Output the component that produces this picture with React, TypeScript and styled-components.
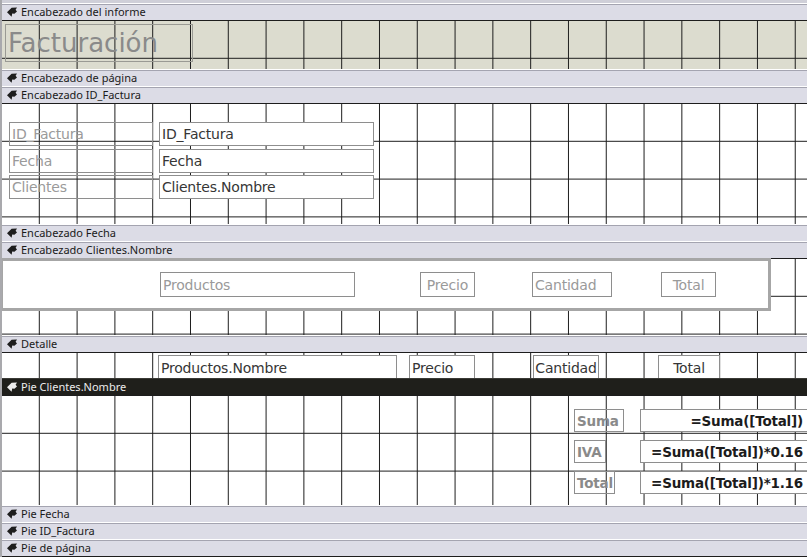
import React from "react";
import styled, { createGlobalStyle, css } from "styled-components";

const Global = createGlobalStyle`
  html, body { margin: 0; padding: 0; background: #fff; overflow: hidden; }
  #root { width: 807px; height: 557px; }
`;

const Page = styled.div`
  width: 807px;
  height: 557px;
  box-sizing: border-box;
  border-left: 2px solid #a9a9ad;
  padding-top: 3px;
  background: #cfcfd8;
  display: flex;
  flex-direction: column;
  overflow: hidden;
`;

const Bar = styled.div<{ $dark?: boolean }>`
  flex: 0 0 17px;
  height: 17px;
  box-sizing: border-box;
  display: flex;
  align-items: center;
  gap: 4px;
  padding: 0 0 0 5px;
  font-family: "Noto Sans", "DejaVu Sans", sans-serif;
  font-size: 11px;
  white-space: nowrap;
  ${(p) =>
    p.$dark
      ? css`
          background: linear-gradient(#3a3a36 0 1px, #1f1f1b 1px);
          color: #ececec;
        `
      : css`
          background: linear-gradient(#ffffff 0 1px, #a4a4b0 1px 2px, #dcdce6 2px);
          color: #1a1a1a;
        `}
`;

const BarLabel = styled.span`
  line-height: 15px;
`;

const Section = styled.div<{ $h: number; $bg?: string }>`
  position: relative;
  flex: 0 0 ${(p) => p.$h}px;
  height: ${(p) => p.$h}px;
  box-sizing: border-box;
  overflow: hidden;
  background-color: ${(p) => p.$bg ?? "#ffffff"};
  background-image: linear-gradient(to right, transparent 36.8px, #1c1c1c 36.8px),
    linear-gradient(to bottom, #1c1c1c 1px, transparent 1px);
  background-size: 37.8px 37.8px;
`;

/* Stacked label / text box pairs of the ID_Factura header */
const FieldGrid = styled.div`
  display: grid;
  grid-template-columns: 144px 215px;
  grid-auto-rows: 24px;
  column-gap: 6px;
  row-gap: 2.5px;
  padding: 19px 0 0 7px;
`;

/* Totals block of the Pie Clientes.Nombre footer */
const TotalsGrid = styled.div`
  display: grid;
  grid-template-columns: 66px 170px;
  grid-auto-rows: 23px;
  row-gap: 8px;
  padding: 14px 0 0 572px;
  align-items: stretch;
`;

const SelectedBand = styled.div`
  position: absolute;
  left: -2px;
  top: 0;
  width: 771px;
  height: 53px;
  box-sizing: border-box;
  border: 3px solid #a6a6a6;
  background: #ffffff;
`;

type Tone = "label" | "field";

const controlLook = css<{ $tone?: Tone; $bold?: boolean; $align?: "left" | "center" | "right" }>`
  box-sizing: border-box;
  border: 1px solid #8e8e8e;
  background: ${(p) => (p.$tone === "field" ? "#ffffff" : "transparent")};
  color: ${(p) =>
    p.$tone === "field" ? (p.$bold ? "#1c1c1c" : "#363636") : p.$bold ? "#8a8a8a" : "#9a9a9a"};
  font-family: "DejaVu Sans", "Liberation Sans", sans-serif;
  font-size: ${(p) => (p.$bold ? "13.5px" : "14px")};
  font-weight: ${(p) => (p.$bold ? 700 : 400)};
  display: flex;
  align-items: center;
  justify-content: ${(p) =>
    p.$align === "center" ? "center" : p.$align === "right" ? "flex-end" : "flex-start"};
  padding: 0 ${(p) => (p.$align === "right" ? "6px" : "2px")} 0 2px;
  white-space: nowrap;
  overflow: hidden;
  letter-spacing: -0.2px;
`;

/* control that sits in a flow grid */
const Cell = styled.div<{ $tone?: Tone; $bold?: boolean; $align?: "left" | "center" | "right"; $w?: number }>`
  ${controlLook};
  ${(p) => (p.$w ? `width: ${p.$w}px; justify-self: start;` : "")}
`;

/* control placed freely on the design canvas */
const Placed = styled.div<{
  $x: number;
  $y: number;
  $w: number;
  $h: number;
  $tone?: Tone;
  $bold?: boolean;
  $align?: "left" | "center" | "right";
}>`
  ${controlLook};
  position: absolute;
  left: ${(p) => p.$x}px;
  top: ${(p) => p.$y}px;
  width: ${(p) => p.$w}px;
  height: ${(p) => p.$h}px;
`;

const Title = styled.div`
  margin: 4px 0 0 3px;
  width: 188px;
  height: 38px;
  box-sizing: border-box;
  border: 1px solid #9a9a94;
  color: #8a8a8a;
  font-family: "DejaVu Sans", "Liberation Sans", sans-serif;
  font-size: 26px;
  line-height: 36px;
  padding-left: 2px;
  white-space: nowrap;
  overflow: hidden;
`;

const SectionIcon = ({ light }: { light?: boolean }) => (
  <svg width="10" height="10" viewBox="0 0 10 10" aria-hidden="true">
    <path
      d="M0 5.2 L4.6 0.8 L10 0.4 L8.6 2.8 L10 4.4 L7.4 6.8 L5.2 6.6 L4.6 9.8 Z"
      fill={light ? "#ededed" : "#1e1e1e"}
    />
  </svg>
);

const SectionBar = ({ label, dark }: { label: string; dark?: boolean }) => (
  <Bar $dark={dark}>
    <SectionIcon light={dark} />
    <BarLabel>{label}</BarLabel>
  </Bar>
);

export default function App() {
  return (
    <>
      <Global />
      <Page>
        <SectionBar label="Encabezado del informe" />
        <Section $h={49} $bg="#dcdccf">
          <Title>Facturación</Title>
        </Section>
        <SectionBar label="Encabezado de página" />
        <SectionBar label="Encabezado ID_Factura" />
        <Section $h={121}>
          <FieldGrid>
            <Cell $tone="label">ID_Factura</Cell>
            <Cell $tone="field">ID_Factura</Cell>
            <Cell $tone="label">Fecha</Cell>
            <Cell $tone="field">Fecha</Cell>
            <Cell $tone="label">Clientes</Cell>
            <Cell $tone="field">Clientes.Nombre</Cell>
          </FieldGrid>
        </Section>
        <SectionBar label="Encabezado Fecha" />
        <SectionBar label="Encabezado Clientes.Nombre" />
        <Section $h={77}>
          <SelectedBand />
          <Placed $x={158} $y={14} $w={195} $h={25} $tone="label">Productos</Placed>
          <Placed $x={418} $y={14} $w={55} $h={25} $tone="label" $align="right">Precio</Placed>
          <Placed $x={530} $y={14} $w={80} $h={25} $tone="label">Cantidad</Placed>
          <Placed $x={659} $y={14} $w={55} $h={25} $tone="label" $align="center">Total</Placed>
        </Section>
        <SectionBar label="Detalle" />
        <Section $h={26}>
          <Placed $x={156} $y={3} $w={239} $h={26} $tone="field">Productos.Nombre</Placed>
          <Placed $x={407} $y={3} $w={66} $h={26} $tone="field">Precio</Placed>
          <Placed $x={531} $y={3} $w={66} $h={26} $tone="field" $align="center">Cantidad</Placed>
          <Placed $x={656} $y={3} $w={62} $h={26} $tone="field" $align="center">Total</Placed>
        </Section>
        <SectionBar label="Pie Clientes.Nombre" dark />
        <Section $h={110}>
          <TotalsGrid>
            <Cell $tone="label" $bold $w={50}>Suma</Cell>
            <Cell $tone="field" $bold $align="right">=Suma([Total])</Cell>
            <Cell $tone="label" $bold $w={32}>IVA</Cell>
            <Cell $tone="field" $bold $align="right">=Suma([Total])*0.16</Cell>
            <Cell $tone="label" $bold $w={41}>Total</Cell>
            <Cell $tone="field" $bold $align="right">=Suma([Total])*1.16</Cell>
          </TotalsGrid>
        </Section>
        <SectionBar label="Pie Fecha" />
        <SectionBar label="Pie ID_Factura" />
        <SectionBar label="Pie de página" />
        <Section $h={4} />
      </Page>
    </>
  );
}
